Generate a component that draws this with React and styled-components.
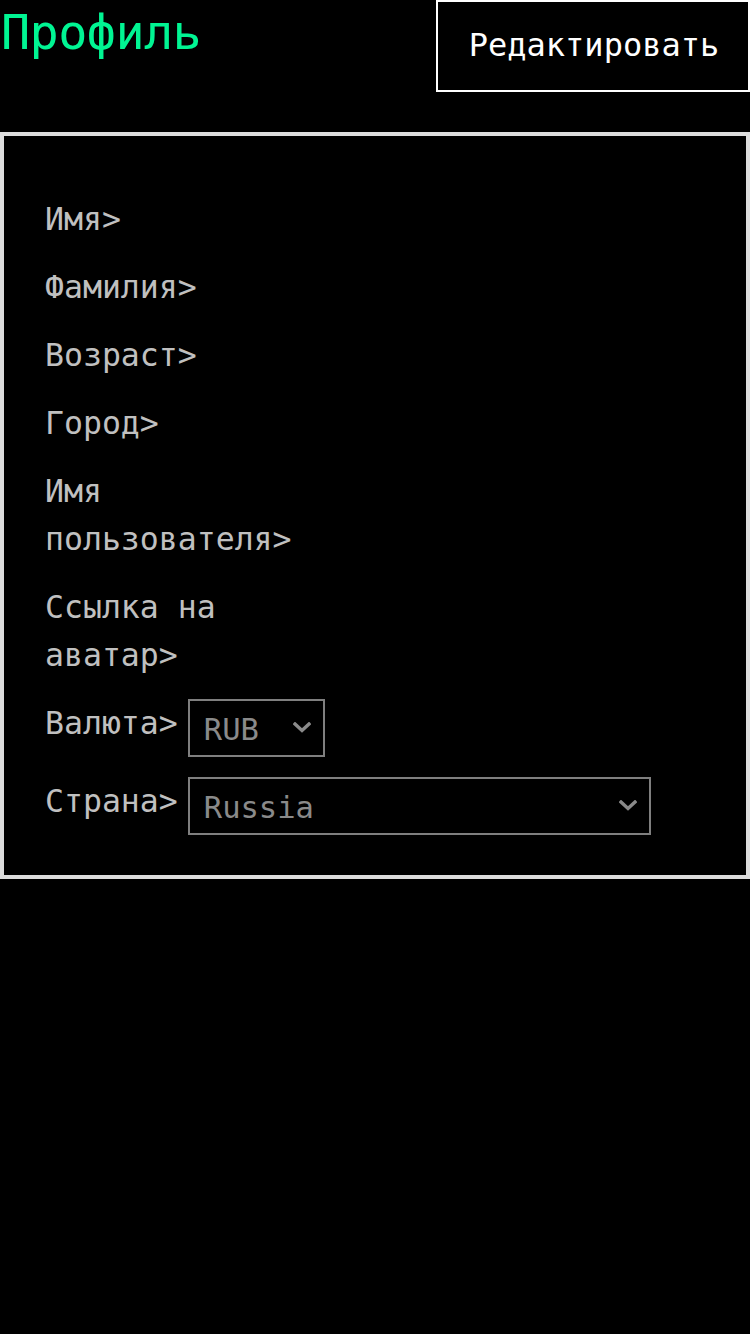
import styled, { createGlobalStyle } from "styled-components";

const GlobalStyle = createGlobalStyle`
  html, body {
    margin: 0;
    padding: 0;
    background: #000;
    font-family: "DejaVu Sans Mono", "Liberation Mono", monospace;
  }
`;

const fields = [
  "Имя>",
  "Фамилия>",
  "Возраст>",
  "Город>",
  "Имя пользователя>",
  "Ссылка на аватар>",
];

const Chevron = () => (
  <ChevronIcon width="18" height="11" viewBox="0 0 18 11">
    <polyline
      points="2,2 9,8.5 16,2"
      fill="none"
      stroke="currentColor"
      strokeWidth="3.4"
      strokeLinecap="square"
    />
  </ChevronIcon>
);

const App = () => {
  return (
    <Page>
      <GlobalStyle />
      <Header>
        <Title>Профиль</Title>
        <EditButton>Редактировать</EditButton>
      </Header>
      <Panel>
        {fields.map((f) => (
          <Row key={f}>
            <Label>{f}</Label>
          </Row>
        ))}
        <Row>
          <Label>Валюта&gt;</Label>
          <SelectWrap width={137}>
            <Select defaultValue="RUB">
              <option>RUB</option>
              <option>USD</option>
              <option>EUR</option>
            </Select>
            <Chevron />
          </SelectWrap>
        </Row>
        <Row>
          <Label>Страна&gt;</Label>
          <SelectWrap width={463}>
            <Select defaultValue="Russia">
              <option>Russia</option>
              <option>Belarus</option>
              <option>Kazakhstan</option>
            </Select>
            <Chevron />
          </SelectWrap>
        </Row>
      </Panel>
    </Page>
  );
};

const Page = styled.div`
  width: 750px;
  min-height: 1334px;
  background: #000;
`;

const Header = styled.header`
  display: flex;
  justify-content: space-between;
  align-items: flex-start;
  height: 92px;
  margin-bottom: 40px;
`;

const Title = styled.h1`
  margin: 0;
  padding: 3px 0 0 1px;
  font-size: 48.5px;
  font-weight: 400;
  line-height: 58px;
  color: #00f593;
  letter-spacing: -0.6px;
`;

const EditButton = styled.button`
  width: 314px;
  height: 92px;
  box-sizing: border-box;
  background: #000;
  border: 2px solid #fff;
  color: #fff;
  font-family: "DejaVu Sans Mono", "Liberation Mono", monospace;
  font-size: 32px;
  padding: 0 0 2px 2px;
  cursor: pointer;
`;

const Panel = styled.section`
  border: 4px solid #dddddd;
  padding: 59px 40px 40px 41px;
  display: flex;
  flex-direction: column;
  gap: 20px;
`;

const Row = styled.div`
  display: flex;
  align-items: flex-start;
  gap: 10px;
`;

const Label = styled.label`
  max-width: 260px;
  font-size: 31.5px;
  line-height: 48px;
  color: #c0c0c0;
`;

const SelectWrap = styled.div`
  position: relative;
  width: ${(p) => p.width}px;
  height: 58px;
  color: #8a8a8a;
`;

const Select = styled.select`
  appearance: none;
  width: 100%;
  height: 100%;
  box-sizing: border-box;
  background: #000;
  border: 2px solid #7f7f7f;
  color: #8a8a8a;
  font-family: "DejaVu Sans Mono", "Liberation Mono", monospace;
  font-size: 30.5px;
  padding: 2px 0 0 14px;
  outline: none;
`;

const ChevronIcon = styled.svg`
  position: absolute;
  right: 14px;
  top: 23px;
  pointer-events: none;
`;

export default App;
